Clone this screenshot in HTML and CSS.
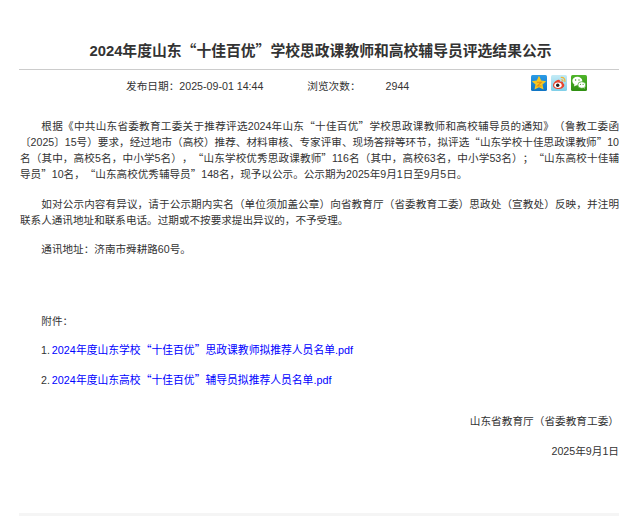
FILE: index.html
```html
<!DOCTYPE html>
<html lang="zh-CN">
<head>
<meta charset="utf-8">
<title>2024年度山东“十佳百优”学校思政课教师和高校辅导员评选结果公示</title>
<link rel="stylesheet" href="styles.css">
</head>
<body>
<main class="article">
  <h1 class="title">2024年度山东<span class="q">“</span>十佳百优<span class="q">”</span>学校思政课教师和高校辅导员评选结果公示</h1>
  <div class="meta">
    <span class="meta-label">发布日期：</span>
    <span class="meta-date">2025-09-01 14:44</span>
    <span class="meta-label views">浏览次数：</span>
    <span class="meta-count">2944</span>
    <div class="share">
      <svg class="icon" viewBox="0 0 16 16"><defs><linearGradient id="gq" x1="0" y1="0" x2="0" y2="1"><stop offset="0" stop-color="#2b9be6"/><stop offset="1" stop-color="#0f74c4"/></linearGradient></defs><rect width="16" height="16" rx="1.500" fill="url(#gq)"/><path d="M8 .8l2.200 4.800 5 .6-3.700 3.400 1 5L8 12.200l-4.500 2.400 1-5L.8 6.200l5-.6z" fill="#f8c81e"/><path d="M5.800 7.300h4.400L6.300 11h4.200" fill="none" stroke="#e58a17" stroke-width="1.100"/></svg>
      <svg class="icon" viewBox="0 0 16 16"><defs><linearGradient id="gw" x1="0" y1="0" x2="0" y2="1"><stop offset="0" stop-color="#c4ebf6"/><stop offset="1" stop-color="#7fcfe8"/></linearGradient></defs><rect width="16" height="16" rx="1.500" fill="url(#gw)"/><path d="M2 10.500C2 8 5 5.200 7.500 4.800c1.500-.2 1.700 1 1.300 2 2-.7 3.600-.2 3.200 1.500.8.400 1.300 1 1.300 1.900 0 2.100-2.800 3.800-5.800 3.800S2 12.600 2 10.500z" fill="#e8452f"/><ellipse cx="7" cy="10.300" rx="3.700" ry="2.700" fill="#fff"/><circle cx="6.700" cy="10.300" r="1.700" fill="#222"/><path d="M9.800 2.500c2.800-.5 4.600 1.500 4 4.300M10.300 4.800c1.200-.2 1.800.5 1.600 1.600" fill="none" stroke="#f2b632" stroke-width="1.200"/></svg>
      <svg class="icon" viewBox="0 0 16 16"><defs><linearGradient id="gc" x1="0" y1="0" x2="0" y2="1"><stop offset="0" stop-color="#4fb52a"/><stop offset="1" stop-color="#2f8f12"/></linearGradient></defs><rect width="16" height="16" rx="1.500" fill="url(#gc)"/><ellipse cx="6.300" cy="6" rx="5" ry="4.200" fill="#fff"/><path d="M3.500 9l-.5 2.500L6 10z" fill="#fff"/><ellipse cx="10.800" cy="10" rx="4" ry="3.300" fill="#fff" stroke="#3aa31c" stroke-width=".7"/><path d="M12.500 12.500l1 1.800-.2-2.500z" fill="#fff"/><circle cx="4.600" cy="5" r=".7" fill="#3aa31c"/><circle cx="8" cy="5" r=".7" fill="#3aa31c"/><circle cx="9.500" cy="9.300" r=".6" fill="#3aa31c"/><circle cx="12.100" cy="9.300" r=".6" fill="#3aa31c"/></svg>
    </div>
  </div>
  <div class="body">
    <p class="para">根据《中共山东省委教育工委关于推荐评选2024年山东<span class="q">“</span>十佳百优<span class="q">”</span>学校思政课教师和高校辅导员的通知》（鲁教工委函〔2025〕15号）要求，经过地市（高校）推荐、材料审核、专家评审、现场答辩等环节，拟评选<span class="q">“</span>山东学校十佳思政课教师<span class="q">”</span>10名（其中，高校5名，中小学5名），<span class="q">“</span>山东学校优秀思政课教师<span class="q">”</span>116名（其中，高校63名，中小学53名）；<span class="q">“</span>山东高校十佳辅导员<span class="q">”</span>10名，<span class="q">“</span>山东高校优秀辅导员<span class="q">”</span>148名，现予以公示。公示期为2025年9月1日至9月5日。</p>
    <p class="para">如对公示内容有异议，请于公示期内实名（单位须加盖公章）向省教育厅（省委教育工委）思政处（宣教处）反映，并注明联系人通讯地址和联系电话。过期或不按要求提出异议的，不予受理。</p>
    <p class="para">通讯地址：济南市舜耕路60号。</p>
    <p class="para attach-head">附件：</p>
    <p class="attach">1. <a class="link" href="#">2024年度山东学校<span class="q">“</span>十佳百优<span class="q">”</span>思政课教师拟推荐人员名单.pdf</a></p>
    <p class="attach">2. <a class="link" href="#">2024年度山东高校<span class="q">“</span>十佳百优<span class="q">”</span>辅导员拟推荐人员名单.pdf</a></p>
    <p class="sign first">山东省教育厅（省委教育工委）</p>
    <p class="sign">2025年9月1日</p>
  </div>
  <div class="foot-band"></div>
</main>
</body>
</html>
```
FILE: styles.css
```css
* { box-sizing: border-box; }
html, body { margin: 0; padding: 0; background: #fff; }
body {
  height: 516px;
  overflow: hidden;
  font-family: "Liberation Sans", "Noto Sans CJK SC", sans-serif;
  font-size: 10.67px;
  color: #333;
  text-spacing-trim: space-all;
}
.q { font-family: "Noto Sans CJK SC", sans-serif; }
.article { width: 600px; margin-left: 19px; padding-top: 40px; }
.title {
  margin: 0;
  height: 30px;
  padding-left: 3px;
  border-bottom: 1px solid #ccc;
  font-size: 14.8px;
  line-height: 20px;
  font-weight: bold;
  text-align: center;
  color: #333;
}
.meta {
  display: flex;
  align-items: center;
  height: 32px;
  padding-left: 107px;
  line-height: 16px;
}
.meta-date { width: 128px; }
.meta-count { margin-left: 25px; }
.share { display: flex; gap: 4px; margin-left: 122px; margin-top: -6px; }
.icon { width: 16px; height: 16px; display: block; }
.body { padding: 16px 0 0 1px; }
.para {
  margin: 0 0 13.5px;
  font-size: 10.6px;
  line-height: 16px;
  text-indent: 21.34px;
  text-align: justify;
}
.attach-head { margin-top: 56px; margin-bottom: 12px; }
.attach { margin: 0 0 12.5px; padding-left: 21px; line-height: 16px; word-spacing: -1px; }
.link { color: #00f; text-decoration: none; font-size: 10.8px; word-spacing: 0; }
.sign { margin: 0 0 14px; line-height: 16px; text-align: right; }
.first { margin-top: 25px; }
.foot-band { height: 8px; margin-top: 54px; background: #f5f5f5; }
```
